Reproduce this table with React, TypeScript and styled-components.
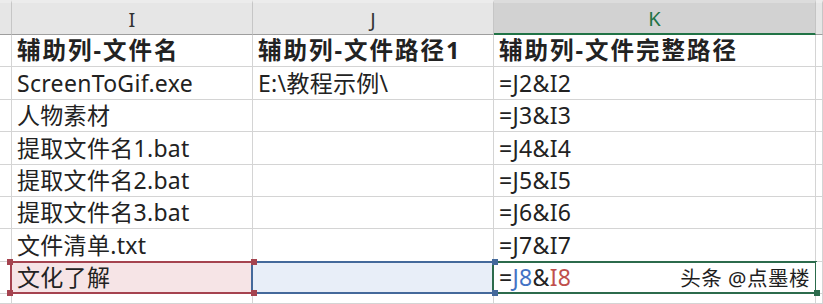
import React from 'react'
import styled, { createGlobalStyle } from 'styled-components'

const GlobalStyle = createGlobalStyle`
  html, body {
    margin: 0;
    padding: 0;
    background: #ffffff;
    overflow: hidden;
  }
  * {
    box-sizing: border-box;
  }
`

const FONT = `'Noto Sans', 'Noto Sans CJK SC', sans-serif`

const Sheet = styled.div`
  width: 823px;
  height: 304px;
  display: grid;
  grid-template-columns: 12px 241px 241px 322px 1fr;
  grid-template-rows: 35px repeat(8, 32.4px) 1fr;
  font-family: ${FONT};
  color: #222;
  overflow: hidden;
`

const ColHead = styled.div<{ $active?: boolean }>`
  display: flex;
  align-items: center;
  justify-content: center;
  background: ${p => (p.$active ? '#d2d2d2' : '#e6e6e6')};
  border-top: 3px solid ${p => (p.$active ? '#dcdcdc' : '#ececec')};
  border-right: 1px solid ${p => (p.$active ? '#c4c4c4' : '#c6c6c6')};
  border-bottom: ${p => (p.$active ? '2px solid #217346' : '1px solid #9e9e9e')};
  color: ${p => (p.$active ? '#217346' : '#333')};
  font-size: 20px;
  padding-top: 1px;
`

const Cell = styled.div<{ $bold?: boolean }>`
  position: relative;
  display: flex;
  align-items: flex-end;
  padding: 0 0 1px 5px;
  border-right: 1px solid #d4d4d4;
  border-bottom: 1px solid #d4d4d4;
  font-size: ${p => (p.$bold ? '23.5px' : '23px')};
  letter-spacing: ${p => (p.$bold ? '2px' : '0.3px')};
  line-height: 29px;
  font-weight: ${p => (p.$bold ? 700 : 400)};
  white-space: nowrap;
  background: #fff;
`

const SelBox = styled.div<{ $color: string; $fill: string }>`
  position: absolute;
  inset: -1px -2px -1px -2px;
  border: 2px solid ${p => p.$color};
  background: ${p => p.$fill};
  z-index: 0;
`

const CellText = styled.span`
  position: relative;
  z-index: 1;
`

const Handle = styled.span<{ $color: string; $pos: string }>`
  position: absolute;
  width: 6px;
  height: 6px;
  background: ${p => p.$color};
  z-index: 2;
  ${p => p.$pos}
`

const Ref = styled.span<{ $c: string }>`
  color: ${p => p.$c};
`

const Watermark = styled.span`
  position: absolute;
  right: 5px;
  bottom: 1px;
  z-index: 3;
  font-size: 20.5px;
  line-height: 28px;
  color: #1e1e1e;
  letter-spacing: 0.5px;
  text-shadow: 0 0 2px #fff, 0 0 2px #fff, 0 0 3px #fff;
`

const rows: [string, string, string][] = [
  ['ScreenToGif.exe', 'E:\\教程示例\\', '=J2&I2'],
  ['人物素材', '', '=J3&I3'],
  ['提取文件名1.bat', '', '=J4&I4'],
  ['提取文件名2.bat', '', '=J5&I5'],
  ['提取文件名3.bat', '', '=J6&I6'],
  ['文件清单.txt', '', '=J7&I7']
]

const RED = '#a5434f'
const BLUE = '#44699b'
const GREEN = '#2c6b4c'

const corners = {
  tl: 'left: -5px; top: -3px;',
  tr: 'right: -5px; top: -3px;',
  bl: 'left: -5px; bottom: -3px;',
  br: 'right: -5px; bottom: -3px;'
}

export default function App() {
  return (
    <>
      <GlobalStyle />
      <Sheet>
        <ColHead />
        <ColHead>I</ColHead>
        <ColHead>J</ColHead>
        <ColHead $active>K</ColHead>
        <ColHead />

        <Cell />
        <Cell $bold>辅助列-文件名</Cell>
        <Cell $bold>辅助列-文件路径1</Cell>
        <Cell $bold>辅助列-文件完整路径</Cell>
        <Cell />

        {rows.map(r => (
          <React.Fragment key={r[2]}>
            <Cell />
            <Cell>{r[0]}</Cell>
            <Cell>{r[1]}</Cell>
            <Cell>{r[2]}</Cell>
            <Cell />
          </React.Fragment>
        ))}

        <Cell />
        <Cell>
          <SelBox $color={RED} $fill="#f6e4e6" />
          <Handle $color={RED} $pos={corners.tl} />
          <Handle $color={RED} $pos={corners.tr} />
          <Handle $color={RED} $pos={corners.bl} />
          <Handle $color={RED} $pos={corners.br} />
          <CellText>文化了解</CellText>
        </Cell>
        <Cell>
          <SelBox $color={BLUE} $fill="#e8eef8" />
          <Handle $color={BLUE} $pos={corners.tr} />
          <Handle $color={BLUE} $pos={corners.br} />
        </Cell>
        <Cell>
          <SelBox $color={GREEN} $fill="#ffffff" />
          <Handle $color={GREEN} $pos={corners.br} />
          <CellText>
            =<Ref $c="#4472c4">J8</Ref>&amp;<Ref $c="#c0504d">I8</Ref>
          </CellText>
          <Watermark>头条 @点墨楼</Watermark>
        </Cell>
        <Cell />

        <Cell />
        <Cell />
        <Cell />
        <Cell />
        <Cell />
      </Sheet>
    </>
  )
}
